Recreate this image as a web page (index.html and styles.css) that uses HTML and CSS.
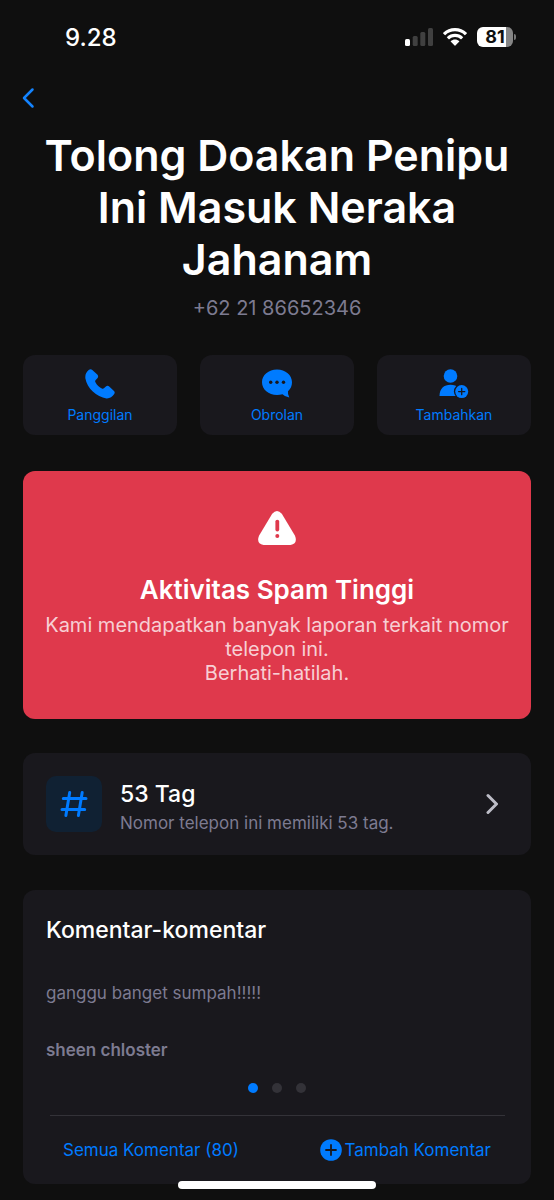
FILE: index.html
```html
<!DOCTYPE html>
<html lang="id">
<head>
<meta charset="utf-8">
<meta name="viewport" content="width=device-width, initial-scale=1">
<title>Detail nomor</title>
<link rel="stylesheet" href="styles.css">
</head>
<body>
<header class="status">
  <time class="clock">9.28</time>
  <div class="indicators">
    <svg width="28" height="18" viewBox="0 0 28 18" aria-hidden="true">
      <rect x="0" y="11" width="5" height="7" rx="1.5" fill="#fff"/>
      <g fill="#404040"><rect x="7.7" y="8" width="5" height="10" rx="1.5"/><rect x="15.3" y="4" width="5" height="14" rx="1.5"/><rect x="23" y="0" width="5" height="18" rx="1.5"/></g>
    </svg>
    <svg width="24" height="18" viewBox="0 0 24 18" aria-hidden="true">
      <path d="M12 0C16.6 0 20.8 1.8 23.8 4.7Q24.1 5 23.8 5.4L22.2 7Q21.9 7.3 21.5 7C19 4.6 15.700 3.300 12 3.300S5 4.600 2.500 7Q2.100 7.300 1.800 7L.2 5.400Q-.1 5 .2 4.700C3.200 1.800 7.400 0 12 0ZM12 5.700C15.100 5.700 17.900 6.900 20 8.900Q20.300 9.200 20 9.500L18.300 11.200Q18 11.500 17.600 11.200C16.100 9.900 14.200 9.100 12 9.100S7.900 9.900 6.400 11.200Q6 11.500 5.700 11.200L4 9.500Q3.700 9.200 4 8.900C6.100 6.900 8.900 5.700 12 5.700ZM12 11.500C13.600 11.500 15 12.100 16.100 13Q16.500 13.400 16.100 13.800L12.400 17.500Q12 17.900 11.600 17.500L7.900 13.800Q7.500 13.400 7.900 13C9 12.100 10.400 11.500 12 11.500Z" fill="#fff"/>
    </svg>
    <div class="battery"><span class="battery-level">81</span></div>
  </div>
</header>

<main class="page">
  <button class="back" type="button" aria-label="Kembali">
    <svg width="13" height="22" viewBox="0 0 13 22"><path d="M10.500 2.500L2 11l8.500 8.500" fill="none" stroke="#1484ff" stroke-width="2.500" stroke-linecap="round" stroke-linejoin="round"/></svg>
  </button>

  <h1 class="name">Tolong Doakan Penipu Ini Masuk Neraka Jahanam</h1>
  <p class="phone">+62 21 86652346</p>

  <div class="actions">
    <button class="action" type="button">
      <svg width="30" height="30" viewBox="0 0 30 30" aria-hidden="true"><path d="M4 .8Q5.800-.5 7.300.9L12.300 5.600Q13.800 7.200 12.600 8.900L10.500 11.300Q9.900 12.100 10.300 13C11.900 16 14.200 18.400 17.300 19.700Q18.200 20 18.900 19.300L20.900 17.400Q22.600 16.100 24.200 17.400L29 22Q30.300 23.400 29.200 25.100C27.400 27.900 24.700 29.600 21.500 29.400C11.500 27.800 2 19.300.4 9.500C-.1 5.800 1.300 2.800 4 .8Z" fill="#007bff"/></svg>
      <span>Panggilan</span>
    </button>
    <button class="action" type="button">
      <svg width="30" height="30" viewBox="0 0 30 30" aria-hidden="true"><path d="M15 .5C23.500.5 30 6.200 30 13.200C30 16.800 28.700 19.800 26 22.200Q25.500 25 27.300 28.500Q23 28 20.500 25.300Q17.900 26 15 26C6.500 26 0 20.300 0 13.200S6.500.5 15 .5Z" fill="#007bff"/><g fill="#19181d"><circle cx="8.700" cy="13.200" r="1.700"/><circle cx="15" cy="13.200" r="1.700"/><circle cx="21.500" cy="13.200" r="1.700"/></g></svg>
      <span>Obrolan</span>
    </button>
    <button class="action" type="button">
      <svg width="30" height="30" viewBox="0 0 30 30" aria-hidden="true"><circle cx="11.500" cy="7" r="6.800" fill="#007bff"/><path d="M.5 27C.5 19.500 5 15.700 11.500 15.700C15 15.700 17.500 16.700 19.500 18.500V27Z" fill="#007bff"/><circle cx="22.700" cy="22.600" r="7.800" fill="#19181d"/><circle cx="22.700" cy="22.600" r="6.500" fill="#007bff"/><path d="M22.700 19.500v6.200M19.600 22.600h6.200" stroke="#19181d" stroke-width="1.300" stroke-linecap="round"/></svg>
      <span>Tambahkan</span>
    </button>
  </div>

  <section class="alert">
    <svg width="38" height="34" viewBox="0 0 38 34" aria-hidden="true"><path d="M14.200 2.700Q19-2.700 23.800 2.700L37 24.700Q40 32.500 32.500 34H5.500Q-2 32.500 1 24.700Z" fill="#fff"/><path d="M19.300 10.600v8" stroke="#df394c" stroke-width="3.800" stroke-linecap="round"/><circle cx="19.300" cy="25.100" r="2" fill="#df394c"/></svg>
    <h2 class="alert-title">Aktivitas Spam Tinggi</h2>
    <p class="alert-text">Kami mendapatkan banyak laporan terkait nomor telepon ini.<br>Berhati-hatilah.</p>
  </section>

  <a class="tags" href="#tag">
    <span class="tag-icon">
      <svg width="28" height="28" viewBox="0 0 28 28" aria-hidden="true"><path d="M9.700 2.500L5.900 25.500M22.200 2.500L18.400 25.500M3.300 8.500H26M2 19.500H24.700" fill="none" stroke="#007bff" stroke-width="3" stroke-linecap="round"/></svg>
    </span>
    <span class="tag-copy"><strong class="tag-title">53 Tag</strong><span class="tag-text">Nomor telepon ini memiliki 53 tag.</span></span>
    <svg width="13" height="22" viewBox="0 0 13 22" aria-hidden="true"><path d="M2 2.500L10.500 11 2 19.500" fill="none" stroke="#bdbdc7" stroke-width="3" stroke-linecap="round" stroke-linejoin="round"/></svg>
  </a>

  <section class="comments">
    <h2 class="comments-title">Komentar-komentar</h2>
    <p class="comment">ganggu banget sumpah!!!!!</p>
    <p class="author">sheen chloster</p>
    <div class="dots"><span class="dot dot-active"></span><span class="dot"></span><span class="dot"></span></div>
    <div class="comment-links">
      <a href="#semua">Semua Komentar (80)</a>
      <button class="add" type="button"><svg width="22" height="22" viewBox="0 0 22 22" aria-hidden="true"><circle cx="11" cy="11" r="10.800" fill="#007bff"/><path d="M11 6v10M6 11h10" stroke="#19181d" stroke-width="1.800" stroke-linecap="round"/></svg><span>Tambah Komentar</span></button>
    </div>
  </section>
</main>
<div class="home-bar"></div>
</body>
</html>
```
FILE: styles.css
```css
* { box-sizing: border-box; }
body {
  margin: 0;
  background: #0f0f0f;
  color: #fff;
  font-family: Inter, "Liberation Sans", sans-serif;
}
h1, h2, p { margin: 0; }
button { padding: 0; border: 0; background: none; font: inherit; color: #007bff; cursor: pointer; }
a { color: #007bff; text-decoration: none; }
svg { display: block; flex: none; }

.status {
  display: flex;
  justify-content: space-between;
  align-items: center;
  height: 74px;
  padding: 0 41px 0 65px;
}
.clock { font-size: 24px; font-weight: 500; }
.indicators { display: flex; align-items: center; gap: 10px; }
.battery {
  position: relative;
  width: 36px;
  height: 20px;
  border-radius: 6px;
  background: linear-gradient(90deg, #fff 80%, #858585 80%);
  color: #0f0f0f;
  text-align: center;
}
.battery::after {
  content: "";
  position: absolute;
  top: 7px;
  right: -3px;
  width: 2px;
  height: 6px;
  border-radius: 0 2px 2px 0;
  background: #777;
}
.battery-level { display: block; font-size: 18px; line-height: 20px; font-weight: 700; }

.page { padding: 13px 23px 16px; }
.back { display: block; }
.back svg { margin-left: -1px; }
.name {
  margin-top: 20px;
  padding: 0 12px;
  font-size: 43px;
  line-height: 52px;
  font-weight: 600;
  text-align: center;
}
.phone {
  margin-top: 10px;
  font-size: 20px;
  line-height: 26px;
  color: #7d7b91;
  text-align: center;
}
.actions {
  display: grid;
  grid-template-columns: repeat(3, 1fr);
  gap: 23px;
  margin-top: 34px;
}
.action {
  display: flex;
  flex-direction: column;
  align-items: center;
  gap: 7px;
  padding: 14px 0 11px;
  border-radius: 12px;
  background: #19181d;
  font-size: 14px;
  line-height: 18px;
}
.alert {
  display: flex;
  flex-direction: column;
  align-items: center;
  margin-top: 36px;
  padding: 40px 20px 34px;
  border-radius: 12px;
  background: #df394c;
  text-align: center;
}
.alert-title { margin-top: 29px; font-size: 26px; line-height: 32px; font-weight: 600; }
.alert-text { margin-top: 7px; font-size: 20px; line-height: 24px; color: #f7cfd4; }
.tags {
  display: flex;
  align-items: center;
  margin-top: 34px;
  padding: 23px 32px 23px 23px;
  border-radius: 12px;
  background: #19181d;
  color: #fff;
}
.tag-icon {
  display: grid;
  place-items: center;
  width: 56px;
  height: 56px;
  border-radius: 10px;
  background: #102133;
}
.tag-copy { flex: 1; display: flex; flex-direction: column; gap: 7px; padding-top: 5px; margin-left: 18px; }
.tag-title { font-size: 23px; line-height: 26px; font-weight: 500; }
.tag-text { font-size: 17px; line-height: 18px; color: #7d7b91; }
.comments {
  margin-top: 35px;
  padding: 24px 24px 22px 23px;
  border-radius: 12px;
  background: #19181d;
}
.comments-title { font-size: 23px; line-height: 32px; font-weight: 500; }
.comment { margin-top: 35px; font-size: 17px; line-height: 24px; color: #7d7b91; }
.author { margin-top: 33px; font-size: 17px; line-height: 24px; font-weight: 600; color: #7d7b91; }
.dots { display: flex; justify-content: center; gap: 14px; margin-top: 21px; }
.dot { width: 10px; height: 10px; border-radius: 50%; background: #333238; }
.dot-active { background: #007bff; }
.comment-links {
  display: flex;
  justify-content: space-between;
  align-items: center;
  margin: 22px 2px 0 4px;
  padding: 22px 14px 0 13px;
  border-top: 1px solid #333238;
  font-size: 17px;
  line-height: 24px;
}
.add { display: flex; align-items: center; gap: 2px; }
.home-bar {
  position: fixed;
  bottom: 11px;
  left: 50%;
  width: 198px;
  height: 8px;
  margin-left: -99px;
  border-radius: 4px;
  background: #fff;
}
```
